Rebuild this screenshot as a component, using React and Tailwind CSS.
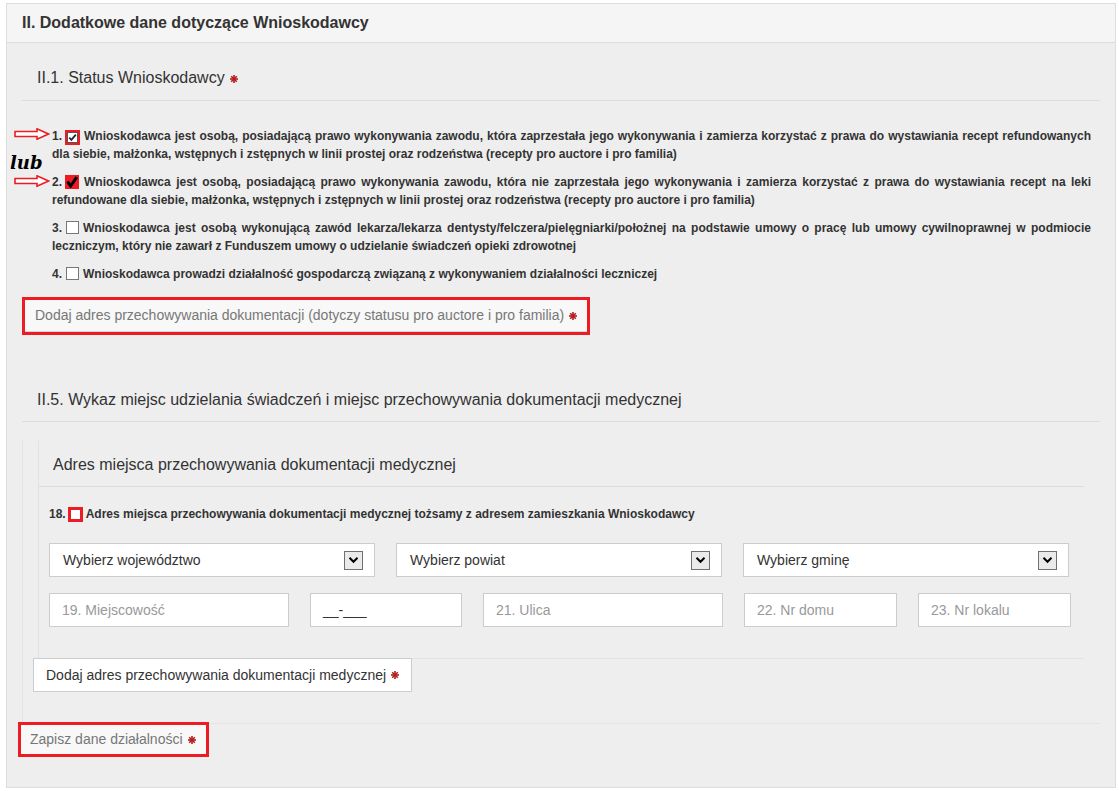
import React from 'react';

const RED = '#ed1c24';

const Star = () => (
  <svg width="8" height="8" viewBox="0 0 8 8" className="inline-block ml-[5px] align-[0px]">
    <g stroke="#b41c1c" strokeWidth="1.6">
      <line x1="4" y1="0" x2="4" y2="8" />
      <line x1="0" y1="4" x2="8" y2="4" />
      <line x1="1.2" y1="1.2" x2="6.8" y2="6.8" />
      <line x1="6.8" y1="1.2" x2="1.2" y2="6.8" />
    </g>
  </svg>
);

const Arrow = ({ top }) => (
  <svg
    width="36"
    height="12"
    viewBox="0 0 36 12"
    className="absolute left-[14px]"
    style={{ top }}
  >
    <path d="M1 3.5 H23 V0.8 L34.5 6 L23 11.2 V8.5 H1 Z" fill="#fff" stroke={RED} strokeWidth="1.6" />
  </svg>
);

const EmptyBox = () => (
  <span className="inline-block w-[13px] h-[13px] border border-[#777] bg-white align-[-2px] ml-[4px] mr-[4px]" />
);

const Checked1 = () => (
  <span className="inline-flex items-center justify-center w-[15px] h-[15px] border-2 border-[#ed1c24] bg-white align-[-3px] ml-[3px] mr-[4px]">
    <svg width="11" height="11" viewBox="0 0 11 11">
      <rect x="0.5" y="0.5" width="10" height="10" fill="#fff" stroke="#555" />
      <path d="M2.3 5.6 L4.4 7.8 L8.8 2.6" fill="none" stroke="#1c2a3a" strokeWidth="1.8" />
    </svg>
  </span>
);

const Checked2 = () => (
  <span className="inline-flex items-center justify-center w-[14px] h-[14px] bg-[#ed1c24] align-[-2px] ml-[3px] mr-[5px]">
    <svg width="12" height="12" viewBox="0 0 12 12">
      <path d="M1.5 5.5 L4.6 10 L10.8 1.2" fill="none" stroke="#000" strokeWidth="3" />
    </svg>
  </span>
);

const Item = ({ num, box, children }) => (
  <p className="text-[12px] leading-[18px] font-bold text-[#333] text-justify mb-[10px]">
    {num}.{box}{children}
  </p>
);

const Select = ({ label }) => (
  <div className="w-[326px] h-[34px] bg-white border border-[#ccc] flex items-center justify-between pl-[13px] pr-[11px]">
    <span className="text-[14px] text-[#333]">{label}</span>
    <span className="w-[19px] h-[19px] border border-[#707070] bg-[#eaeaea] flex items-center justify-center">
      <svg width="11" height="8" viewBox="0 0 11 8">
        <path d="M1.5 1.8 L5.5 5.8 L9.5 1.8" fill="none" stroke="#000" strokeWidth="2" />
      </svg>
    </span>
  </div>
);

const Input = ({ w, text, dark }) => (
  <div
    className={`h-[34px] bg-white border border-[#ccc] flex items-center pl-[12px] text-[14px] ${w} ${
      dark ? 'text-[#333]' : 'text-[#999]'
    }`}
  >
    {text}
  </div>
);

export default function App() {
  return (
    <div className="min-h-screen bg-white pt-[3px] pl-[6px] relative" style={{ fontFamily: '"Liberation Sans", Arial, sans-serif' }}>
      <div className="w-[1110px] h-[785px] border border-[#ddd] bg-[#eeeeee]">
        {/* header */}
        <div className="h-[39px] bg-[#f5f5f5] border-b border-[#ddd] px-[15px] flex items-center">
          <h2 className="text-[16px] font-bold text-[#333]">II. Dodatkowe dane dotyczące Wnioskodawcy</h2>
        </div>

        <div className="px-[15px]">
          {/* II.1 */}
          <div className="pt-[24px] pb-[11px] pl-[15px] border-b border-[#dcdcdc]">
            <h3 className="text-[16px] leading-[22px] text-[#333]">
              II.1. Status Wnioskodawcy
              <Star />
            </h3>
          </div>

          <div className="pt-[26px] pl-[30px] pr-[9px]">
            <Item num="1" box={<Checked1 />}>
              Wnioskodawca jest osobą, posiadającą prawo wykonywania zawodu, która zaprzestała jego wykonywania i zamierza korzystać z prawa do wystawiania recept refundowanych dla siebie, małżonka, wstępnych i zstępnych w linii prostej oraz rodzeństwa (recepty pro auctore i pro familia)
            </Item>
            <Item num="2" box={<Checked2 />}>
              Wnioskodawca jest osobą, posiadającą prawo wykonywania zawodu, która nie zaprzestała jego wykonywania i zamierza korzystać z prawa do wystawiania recept na leki refundowane dla siebie, małżonka, wstępnych i zstępnych w linii prostej oraz rodzeństwa (recepty pro auctore i pro familia)
            </Item>
            <Item num="3" box={<EmptyBox />}>
              Wnioskodawca jest osobą wykonującą zawód lekarza/lekarza dentysty/felczera/pielęgniarki/położnej na podstawie umowy o pracę lub umowy cywilnoprawnej w podmiocie leczniczym, który nie zawarł z Funduszem umowy o udzielanie świadczeń opieki zdrowotnej
            </Item>
            <Item num="4" box={<EmptyBox />}>
              Wnioskodawca prowadzi działalność gospodarczą związaną z wykonywaniem działalności leczniczej
            </Item>
          </div>

          <div className="mt-[4px] inline-block border-[3px] border-[#ed1c24]">
            <button className="h-[32px] px-[10px] bg-[#f8f8f8] border-b border-[#d5d5d5] text-[14px] text-[#777] flex items-center">
              Dodaj adres przechowywania dokumentacji (dotyczy statusu pro auctore i pro familia)
              <Star />
            </button>
          </div>

          {/* II.5 */}
          <div className="mt-[54px] pb-[10px] pl-[15px] border-b border-[#dcdcdc]">
            <h3 className="text-[16px] leading-[22px] text-[#333]">
              II.5. Wykaz miejsc udzielania świadczeń i miejsc przechowywania dokumentacji medycznej
            </h3>
          </div>

          <div className="border-l border-[#e4e4e4] border-b border-[#e4e4e4] pb-[31px]">
            <div className="mt-[19px] ml-[15px] mr-[16px] border-l border-[#e2e2e2] border-b border-[#e2e2e2] pb-[31px]">
              <div className="pt-[13px] pb-[10px] pl-[14px] border-b border-[#dcdcdc]">
                <h4 className="text-[16px] leading-[22px] text-[#333]">Adres miejsca przechowywania dokumentacji medycznej</h4>
              </div>
              <div className="pl-[10px] pr-[11px]">
                <p className="mt-[18px] text-[12px] leading-[18px] font-bold text-[#333] flex items-center">
                  18.
                  <span className="inline-block w-[15px] h-[15px] border-[3px] border-[#ed1c24] bg-white ml-[2px] mr-[3px]" />
                  Adres miejsca przechowywania dokumentacji medycznej tożsamy z adresem zamieszkania Wnioskodawcy
                </p>
                <div className="mt-[20px] flex gap-[21px]">
                  <Select label="Wybierz województwo" />
                  <Select label="Wybierz powiat" />
                  <Select label="Wybierz gminę" />
                </div>
                <div className="mt-[16px] flex gap-[21px]">
                  <Input w="w-[240px]" text="19. Miejscowość" />
                  <Input w="w-[152px]" text="__-___" dark />
                  <Input w="w-[240px]" text="21. Ulica" />
                  <Input w="w-[153px]" text="22. Nr domu" />
                  <Input w="w-[153px]" text="23. Nr lokalu" />
                </div>
              </div>
            </div>
            <button className="-mt-px ml-[10px] h-[34px] px-[12px] bg-white border border-[#ccc] text-[14px] text-[#333] flex items-center">
              Dodaj adres przechowywania dokumentacji medycznej
              <Star />
            </button>
          </div>

          <button className="-ml-px mt-[1px] h-[29px] w-[185px] px-[9px] bg-[#f8f8f8] text-[14px] text-[#777] flex items-center outline-[3px] outline-solid outline-[#ed1c24]">
            Zapisz dane działalności
            <Star />
          </button>
        </div>
      </div>

      {/* annotations */}
      <Arrow top={128} />
      <Arrow top={175} />
      <span
        className="absolute left-[10px] top-[149px] text-[18px] font-bold italic text-black"
        style={{ fontFamily: '"DejaVu Serif", "Liberation Serif", serif' }}
      >
        lub
      </span>
    </div>
  );
}
